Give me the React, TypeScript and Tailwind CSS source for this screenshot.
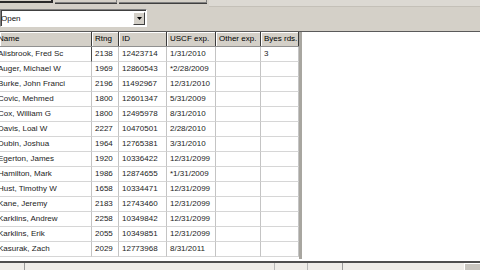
import React from "react";

type Player = {
  name: string;
  rating: string;
  id: string;
  uscf: string;
  other: string;
  byes: string;
};

const players: Player[] = [
  { name: "Alisbrook, Fred Sc", rating: "2138", id: "12423714", uscf: "1/31/2010", other: "", byes: "3" },
  { name: "Auger, Michael W", rating: "1969", id: "12860543", uscf: "*2/28/2009", other: "", byes: "" },
  { name: "Burke, John Franci", rating: "2196", id: "11492967", uscf: "12/31/2010", other: "", byes: "" },
  { name: "Covic, Mehmed", rating: "1800", id: "12601347", uscf: "5/31/2009", other: "", byes: "" },
  { name: "Cox, William G", rating: "1800", id: "12495978", uscf: "8/31/2010", other: "", byes: "" },
  { name: "Davis, Loal W", rating: "2227", id: "10470501", uscf: "2/28/2010", other: "", byes: "" },
  { name: "Dubin, Joshua", rating: "1964", id: "12765381", uscf: "3/31/2010", other: "", byes: "" },
  { name: "Egerton, James", rating: "1920", id: "10336422", uscf: "12/31/2099", other: "", byes: "" },
  { name: "Hamilton, Mark", rating: "1986", id: "12874655", uscf: "*1/31/2009", other: "", byes: "" },
  { name: "Hust, Timothy W", rating: "1658", id: "10334471", uscf: "12/31/2099", other: "", byes: "" },
  { name: "Kane, Jeremy", rating: "2183", id: "12743460", uscf: "12/31/2099", other: "", byes: "" },
  { name: "Karklins, Andrew", rating: "2258", id: "10349842", uscf: "12/31/2099", other: "", byes: "" },
  { name: "Karklins, Erik", rating: "2055", id: "10349851", uscf: "12/31/2099", other: "", byes: "" },
  { name: "Kasurak, Zach", rating: "2029", id: "12773968", uscf: "8/31/2011", other: "", byes: "" },
];

const headers = ["Name", "Rtng", "ID", "USCF exp.", "Other exp.", "Byes rds."];

export default function App() {
  return (
    <div className="w-[480px] h-[270px] overflow-hidden bg-[#d4d0c8] flex flex-col font-['Liberation_Sans',Arial,sans-serif] text-[8px] text-[#1c1c1c]">
      {/* bottoms of the toolbar buttons, cut off by the top edge */}
      <div className="h-[9px] flex items-start gap-[2px]">
        <div className="w-[53px] h-[3px] border-b-2 border-r-2 border-[#2a2a2a]" />
        <div className="w-[62px] h-[3px] border-b border-r border-[#808080] shadow-[0_1px_0_#404040]" />
        <div className="w-[88px] h-[3px] border-b border-r border-[#808080] shadow-[0_1px_0_#404040]" />
        <div className="flex-1 h-[7px] border-b border-[#c4c0b8] bg-[#dcd9d3]" />
      </div>

      {/* status combo */}
      <div className="h-[18px] w-[147px] flex border-t border-l border-[#808080] border-b border-b-white border-r border-r-white">
        <div className="flex-1 flex border-t border-l border-[#404040] bg-white">
          <span className="flex-1 leading-[15px] -ml-[1px] text-[#111]">Open</span>
          <div className="w-[12px] h-[13px] mt-[1px] mr-[1px] flex items-center justify-center bg-[#d4d0c8] border-t border-l border-white border-r border-b border-r-[#404040] border-b-[#404040]">
            <svg width="5" height="3" viewBox="0 0 5 3">
              <path d="M0 0h5L2.5 3z" fill="#000" />
            </svg>
          </div>
        </div>
      </div>

      <div className="h-[4px]" />

      {/* players grid */}
      <div className="h-[228px] flex border-t border-[#5a5a5a]">
        <div className="w-[299px] flex flex-col bg-white">
          <div className="grid grid-cols-[92px_27px_48px_49px_45px_38px] h-[15px] border-b border-[#909090]">
            {headers.map((h, i) => (
              <div
                key={h}
                className={`bg-[#d4d0c8] leading-[14px] border-r border-[#3a3a3a] shadow-[inset_1px_1px_0_#ffffff] text-[#000] truncate ${
                  i === 0 ? "pl-0" : "pl-[3px]"
                }`}
              >
                <span className={i === 0 ? "-ml-[2px]" : ""}>{h}</span>
              </div>
            ))}
          </div>
          {players.map((p, r) => (
            <div key={p.name} className="grid grid-cols-[92px_27px_48px_49px_45px_38px] h-[15px]">
              {[p.name, p.rating, p.id, p.uscf, p.other, p.byes].map((v, i) => (
                <div
                  key={i}
                  className={`leading-[14px] border-b border-[#d6d6d6] truncate ${
                    r === 0 && i === 0 ? "border-r border-r-[#4a4a4a]" : "border-r border-r-[#c4c4c4]"
                  } ${i === 0 ? "pl-0" : "pl-[3px]"}`}
                >
                  <span className={i === 0 ? "-ml-[2px]" : ""}>{v}</span>
                </div>
              ))}
            </div>
          ))}
          <div className="flex-1" />
        </div>
        <div className="w-[3px] bg-[#a8a6a0]" />
        <div className="flex-1 bg-white" />
      </div>

      {/* top of the panel underneath, mostly cut off */}
      <div className="h-[2px] bg-white" />
      <div className="h-[2px] bg-[#4e4e4e]" />
      <div className="flex-1 flex bg-[#eeece8]">
        <div className="w-[25px] border-r border-[#9a9a9a]" />
        <div className="w-[250px] border-r border-[#b8b8b8]" />
        <div className="w-[33px] border-r border-[#b8b8b8]" />
        <div className="w-[35px] border-r border-[#9a9a9a]" />
        <div className="flex-1" />
        <div className="w-[16px] bg-[#c8c5bf] border-t border-l border-white" />
      </div>
    </div>
  );
}
